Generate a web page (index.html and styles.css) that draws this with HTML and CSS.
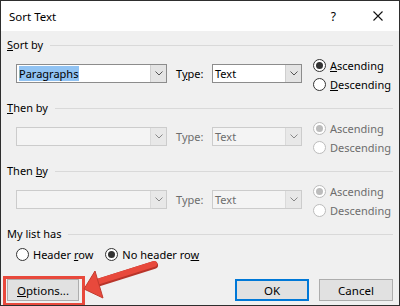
FILE: index.html
```html
<!DOCTYPE html>
<html lang="en">
<head>
    <meta charset="UTF-8">
    <title>Sort Text</title>
    <link rel="stylesheet" href="styles.css">
</head>
<body>
    <div class="dialog">
        <div class="titlebar">
            <span class="title">Sort Text</span>
            <span class="help">?</span>
            <span class="close">
                <svg width="10" height="10" viewBox="0 0 10 10"><path d="M0.5 0.5 L9.5 9.5 M9.5 0.5 L0.5 9.5" stroke="#111" stroke-width="1.1"/></svg>
            </span>
        </div>

        <div class="content">
            <div class="group">
                <div class="group-head"><span><u>S</u>ort by</span><span class="rule"></span></div>
                <div class="sort-row">
                    <div class="combo field">
                        <span class="value"><span class="selected">Paragraphs</span></span>
                        <span class="drop"><svg width="8" height="5" viewBox="0 0 8 5"><path d="M0.5 0.5 L4 4 L7.5 0.5" fill="none" stroke="#555" stroke-width="1"/></svg></span>
                    </div>
                    <span class="type-label">T<u>y</u>pe:</span>
                    <div class="combo type">
                        <span class="value">Text</span>
                        <span class="drop"><svg width="8" height="5" viewBox="0 0 8 5"><path d="M0.5 0.5 L4 4 L7.5 0.5" fill="none" stroke="#555" stroke-width="1"/></svg></span>
                    </div>
                    <div class="radios">
                        <div class="radio checked"><span class="circle"></span><span><u>A</u>scending</span></div>
                        <div class="radio"><span class="circle"></span><span><u>D</u>escending</span></div>
                    </div>
                </div>
            </div>

            <div class="group disabled">
                <div class="group-head"><span><u>T</u>hen by</span><span class="rule"></span></div>
                <div class="sort-row">
                    <div class="combo field">
                        <span class="value"></span>
                        <span class="drop"><svg width="8" height="5" viewBox="0 0 8 5"><path d="M0.5 0.5 L4 4 L7.5 0.5" fill="none" stroke="#888" stroke-width="1"/></svg></span>
                    </div>
                    <span class="type-label">Type:</span>
                    <div class="combo type">
                        <span class="value">Text</span>
                        <span class="drop"><svg width="8" height="5" viewBox="0 0 8 5"><path d="M0.5 0.5 L4 4 L7.5 0.5" fill="none" stroke="#888" stroke-width="1"/></svg></span>
                    </div>
                    <div class="radios">
                        <div class="radio checked"><span class="circle"></span><span>Ascending</span></div>
                        <div class="radio"><span class="circle"></span><span>Descending</span></div>
                    </div>
                </div>
            </div>

            <div class="group disabled">
                <div class="group-head"><span>Then <u>b</u>y</span><span class="rule"></span></div>
                <div class="sort-row">
                    <div class="combo field">
                        <span class="value"></span>
                        <span class="drop"><svg width="8" height="5" viewBox="0 0 8 5"><path d="M0.5 0.5 L4 4 L7.5 0.5" fill="none" stroke="#888" stroke-width="1"/></svg></span>
                    </div>
                    <span class="type-label">Type:</span>
                    <div class="combo type">
                        <span class="value">Text</span>
                        <span class="drop"><svg width="8" height="5" viewBox="0 0 8 5"><path d="M0.5 0.5 L4 4 L7.5 0.5" fill="none" stroke="#888" stroke-width="1"/></svg></span>
                    </div>
                    <div class="radios">
                        <div class="radio checked"><span class="circle"></span><span>Ascending</span></div>
                        <div class="radio"><span class="circle"></span><span>Descending</span></div>
                    </div>
                </div>
            </div>

            <div class="group">
                <div class="group-head"><span>My list has</span><span class="rule"></span></div>
                <div class="list-row">
                    <div class="radio"><span class="circle"></span><span>Header <u>r</u>ow</span></div>
                    <div class="radio checked"><span class="circle"></span><span>No header ro<u>w</u></span></div>
                </div>
            </div>

            <div class="buttons">
                <button class="btn options"><u>O</u>ptions...</button>
                <span class="spacer"></span>
                <button class="btn default">OK</button>
                <button class="btn">Cancel</button>
            </div>
        </div>

        <!-- callout drawn over the dialog -->
        <div class="highlight"></div>
        <svg class="arrow" width="400" height="306" viewBox="0 0 400 306">
            <line x1="97" y1="283" x2="154" y2="265" stroke="#b8342a" stroke-width="8" stroke-linecap="round"/>
            <line x1="97" y1="282" x2="154" y2="264" stroke="#e8493c" stroke-width="6" stroke-linecap="round"/>
            <polygon points="84,289 95,271 103,298" fill="#e8493c" stroke="#c23a2e" stroke-width="1" stroke-linejoin="round"/>
        </svg>
    </div>
</body>
</html>
```

FILE: styles.css
```css
* {
    box-sizing: border-box;
}
body {
    margin: 0;
    font-family: "Noto Sans", "Open Sans", sans-serif;
    font-size: 11px;
    color: #000;
}
.dialog {
    position: relative;
    width: 400px;
    height: 306px;
    border: 1px solid #2e2e2e;
    background: #f0f0f0;
    overflow: hidden;
}
.titlebar {
    height: 30px;
    background: #fff;
    display: flex;
    align-items: center;
    padding-left: 8px;
}
.title {
    font-size: 11.5px;
    flex-grow: 1;
}
.help {
    font-size: 12px;
    margin-right: 37px;
}
.close {
    display: flex;
    margin-right: 16px;
}
.content {
    padding: 0 6px 0 6px;
}
.group-head {
    height: 16px;
    margin-top: 6px;
    display: flex;
    align-items: center;
    line-height: 16px;
}
.group-head .rule {
    flex-grow: 1;
    height: 1px;
    background: #d9d9d9;
    margin-left: 7px;
}
.sort-row {
    margin-top: 3px;
    height: 38px;
    display: flex;
    align-items: flex-start;
    padding-left: 9px;
}
.combo {
    margin-top: 8px;
    height: 19px;
    display: flex;
    border: 1px solid #8c8c8c;
    background: #fff;
}
.combo .value {
    flex-grow: 1;
    display: flex;
    align-items: center;
    padding-left: 2px;
    line-height: 15px;
}
.combo .selected {
    background: #91c3f3;
    padding-right: 1px;
}
.combo .drop {
    width: 16px;
    display: flex;
    align-items: center;
    justify-content: center;
    background: #e4e4e4;
    border-left: 1px solid #cfcfcf;
}
.combo.field {
    width: 151px;
}
.combo.type {
    width: 90px;
}
.type-label {
    margin: 8px 0 0 9px;
    width: 36px;
    line-height: 19px;
}
.radios {
    margin-left: 11px;
}
.radio {
    display: flex;
    align-items: center;
    height: 19px;
}
.circle {
    width: 13px;
    height: 13px;
    border: 1px solid #333;
    border-radius: 50%;
    background: #fff;
    margin-right: 4px;
    display: flex;
    align-items: center;
    justify-content: center;
}
.radio.checked .circle::after {
    content: "";
    width: 7px;
    height: 7px;
    border-radius: 50%;
    background: #333;
}
.disabled .sort-row {
    color: #6d6d6d;
}
.disabled .combo {
    border-color: #cccccc;
    background: #f4f4f4;
}
.disabled .combo .drop {
    background: #e8e8e8;
    border-left-color: #dadada;
}
.disabled .circle {
    border-color: #bcbcbc;
}
.disabled .radio.checked .circle::after {
    background: #bcbcbc;
}
.list-row {
    margin-top: 3px;
    display: flex;
    padding-left: 9px;
}
.list-row .radio {
    margin-right: 12px;
}
.buttons {
    margin-top: 15px;
    display: flex;
    padding-left: 0;
}
.spacer {
    flex-grow: 1;
}
.btn {
    height: 22px;
    width: 74px;
    margin-left: 10px;
    border: 1px solid #adadad;
    background: #e1e1e1;
    font-family: inherit;
    font-size: 11.5px;
    color: #000;
    padding: 0;
}
.btn.options {
    width: 72px;
    margin-left: 0;
}
.btn.default {
    border: 2px solid #0078d7;
}
.highlight {
    position: absolute;
    left: 2px;
    top: 275px;
    width: 82px;
    height: 30px;
    border: 3px solid #e8493c;
}
.arrow {
    position: absolute;
    left: -1px;
    top: -1px;
}
```
